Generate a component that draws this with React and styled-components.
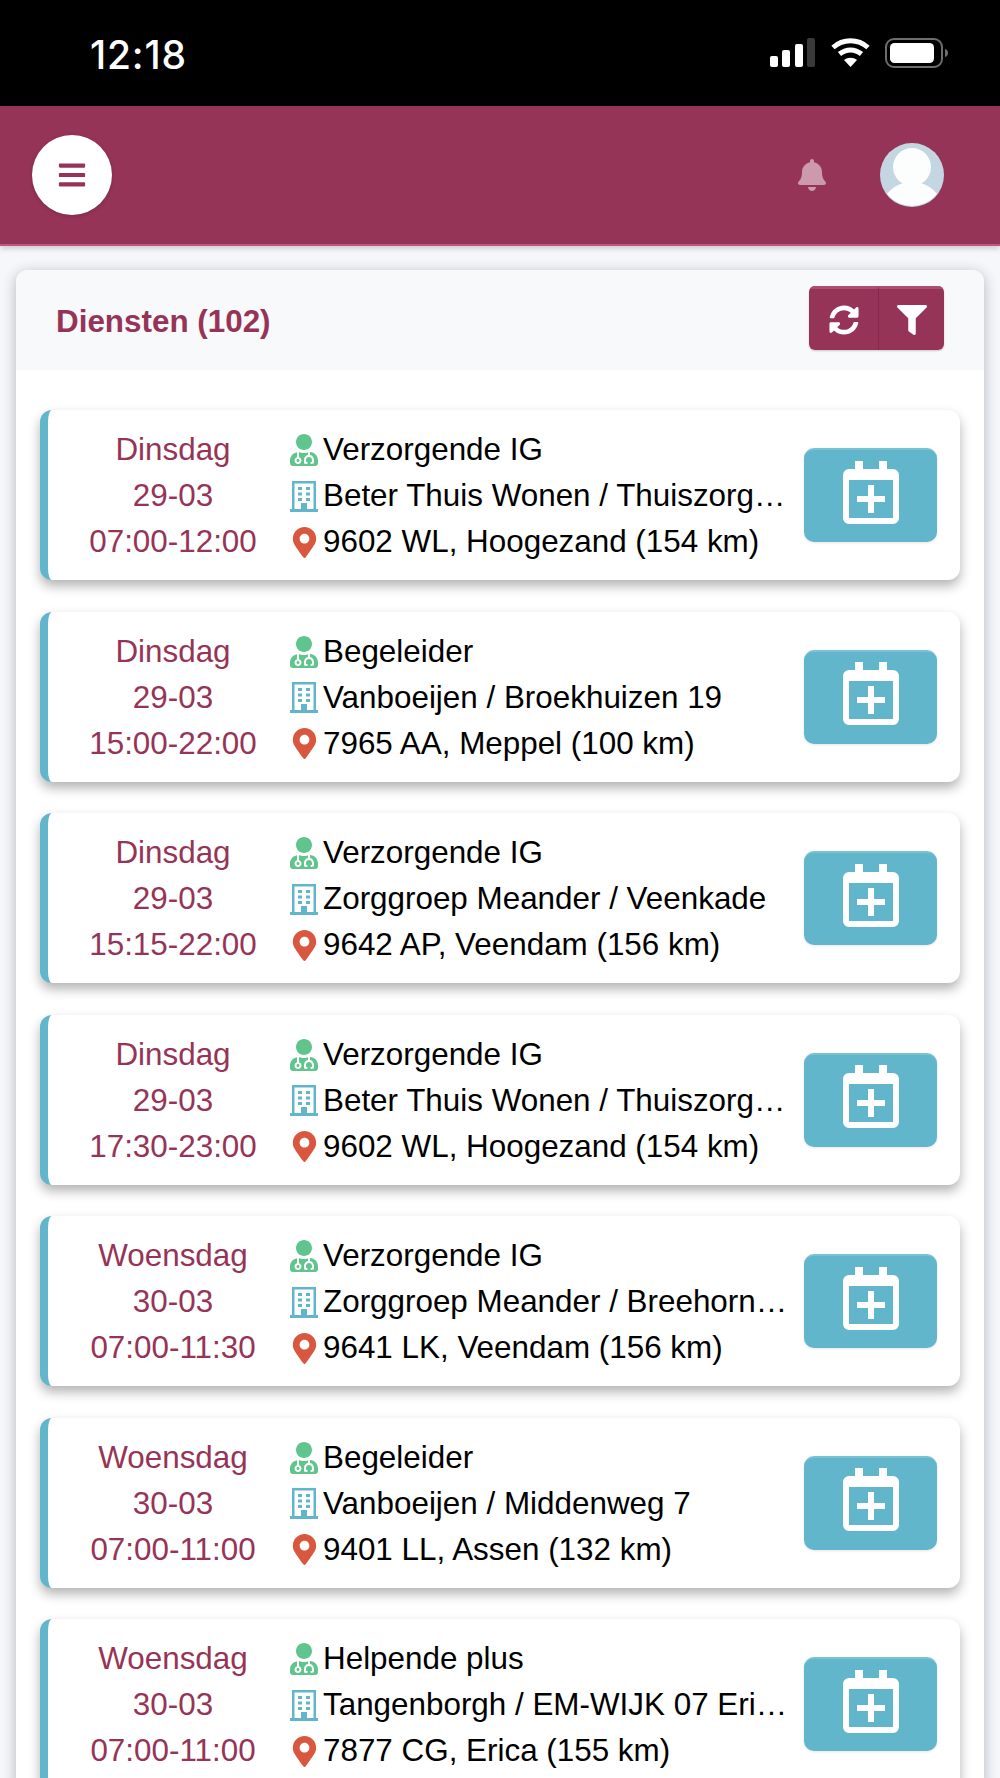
import React from 'react';
import styled, {createGlobalStyle} from 'styled-components';
import {FaBars, FaBell, FaFilter, FaMapMarkerAlt, FaSyncAlt, FaUserMd} from 'react-icons/fa';

const GlobalStyle = createGlobalStyle`
  html, body {
    margin: 0;
    padding: 0;
    height: 1778px;
    overflow: hidden;
    background: #f6f7fa;
    font-family: "Liberation Sans", Arial, sans-serif;
  }
`;

const wine = '#963458';
const teal = '#62b6cb';

const Page = styled.div`
  width: 1000px;
  height: 1778px;
  overflow: hidden;
  display: flex;
  flex-direction: column;
  background: #f6f7fa;
`;

const StatusBar = styled.div`
  height: 106px;
  flex: none;
  background: #000;
  color: #fff;
  display: flex;
  align-items: center;
  justify-content: space-between;
  padding: 0 52px 0 90px;
  box-sizing: border-box;
`;
const Clock = styled.span`
  font-family: Inter, sans-serif;
  font-size: 39px;
  font-weight: 500;
  letter-spacing: .8px;
  position: relative;
  top: 1px;
`;
const StatusIcons = styled.div`
  display: flex;
  align-items: center;
  gap: 15px;
`;

const Header = styled.header`
  height: 140px;
  flex: none;
  box-sizing: border-box;
  background: ${wine};
  border-bottom: 2px solid #c2567f;
  box-shadow: 0 2px 6px rgba(0, 0, 0, .2);
  display: flex;
  align-items: center;
  padding: 0 56px 0 32px;
  position: relative;
  z-index: 2;
`;
const MenuButton = styled.button`
  width: 80px;
  height: 80px;
  border: none;
  border-radius: 50%;
  background: #fff;
  color: ${wine};
  display: flex;
  align-items: center;
  justify-content: center;
  font-size: 30px;
  padding: 0;
  box-shadow: 0 1px 4px rgba(0, 0, 0, .2);
`;
const HeaderRight = styled.div`
  margin-left: auto;
  display: flex;
  align-items: center;
  gap: 52px;
  color: rgba(255, 255, 255, .5);
  font-size: 32px;
`;
const Avatar = styled.svg`
  width: 64px;
  height: 64px;
  display: block;
`;

const Panel = styled.section`
  margin: 24px 16px 0;
  background: #fff;
  border-radius: 12px 12px 0 0;
  box-shadow: 0 3px 14px rgba(40, 40, 70, .32);
  flex: 1;
`;
const PanelHead = styled.div`
  height: 100px;
  box-sizing: border-box;
  background: #f8f9fb;
  border-radius: 12px 12px 0 0;
  display: flex;
  align-items: center;
  justify-content: space-between;
  padding: 0 40px 4px;
`;
const PanelTitle = styled.h2`
  margin: 8px 0 0;
  font-size: 31.4px;
  font-weight: 700;
  color: ${wine};
`;
const ButtonGroup = styled.div`
  display: flex;
  height: 64px;
  border-radius: 6px;
  overflow: hidden;
  box-shadow: 0 1px 2px rgba(0, 0, 0, .2);
`;
const GroupButton = styled.button`
  width: ${p => p.$width}px;
  border: none;
  border-top: 3px solid #aa4f72;
  border-left: ${p => (p.$split ? '1px solid #87284c' : 'none')};
  background: ${wine};
  color: #fff;
  font-size: 30px;
  display: flex;
  align-items: center;
  justify-content: center;
  padding: 0;
`;

const List = styled.div`
  padding: 40px 24px 0;
  display: flex;
  flex-direction: column;
  gap: 31.5px;
`;
const Job = styled.article`
  height: 170px;
  flex: none;
  box-sizing: border-box;
  background: #fff;
  border-left: 8px solid ${teal};
  border-radius: 12px;
  box-shadow: 0 6px 12px rgba(0, 0, 0, .3);
  display: flex;
  align-items: center;
  padding-right: 23px;
`;
const DateColumn = styled.div`
  width: 234px;
  margin: 2px 0 0 8px;
  flex: none;
  color: ${wine};
  font-size: 31.4px;
  line-height: 46px;
  text-align: center;
`;
const Info = styled.div`
  width: 505px;
  flex: none;
  margin: 2px 0 0 -2px;
  display: flex;
  flex-direction: column;
  font-size: 31.4px;
  line-height: 46px;
  color: #000;
`;
const InfoRow = styled.div`
  display: flex;
  align-items: center;
  min-width: 0;
`;
const IconCell = styled.span`
  width: 35px;
  flex: none;
  box-sizing: border-box;
  padding-right: 3px;
  display: flex;
  justify-content: center;
  font-size: ${p => p.$size}px;
  color: ${p => p.$color};
`;
const InfoText = styled.span`
  flex: 1;
  min-width: 0;
  padding-right: 4px;
  white-space: nowrap;
  overflow: hidden;
  text-overflow: ellipsis;
`;
const PlanButton = styled.button`
  width: 133px;
  height: 94px;
  flex: none;
  margin-left: auto;
  border: none;
  border-top: 2px solid #78c2d4;
  border-radius: 10px;
  background: ${teal};
  padding: 0 0 9px;
  display: flex;
  align-items: center;
  justify-content: center;
  box-shadow: 0 1px 3px rgba(0, 0, 0, .1);
`;

const CalendarPlus = () => (
  <svg width="56" height="64" viewBox="0 0 56 64" fill="none">
    <path d="M12 1h8v8h16V1h8v8h6a6 6 0 0 1 6 6v43a6 6 0 0 1-6 6H6a6 6 0 0 1-6-6V15a6 6 0 0 1 6-6h6zM6 20v38h44V20z" fill="#fff"/>
    <path d="M25 25h6v11h11v6H31v11h-6V42H14v-6h11z" fill="#fff"/>
  </svg>
);

const Building = () => (
  <svg width="28" height="31" viewBox="0 0 28 31" fill={teal}>
    <path fillRule="evenodd" d="M2 0h24v28h2v3H0v-3h2zM4.500 2.500V28H11v-6h6v6h6.500V2.500z"/>
    <rect x="8" y="6" width="4" height="3"/>
    <rect x="16" y="6" width="4" height="3"/>
    <rect x="8" y="11.500" width="4" height="3"/>
    <rect x="16" y="11.500" width="4" height="3"/>
    <rect x="8" y="17" width="4" height="3"/>
    <rect x="16" y="17" width="4" height="3"/>
  </svg>
);

const Signal = () => (
  <svg width="46" height="30" viewBox="0 0 46 30">
    <rect x="0" y="18" width="8" height="11" rx="2" fill="#fff"/>
    <rect x="12" y="12" width="8" height="17" rx="2" fill="#fff"/>
    <rect x="25" y="6" width="8" height="23" rx="2" fill="#fff"/>
    <rect x="37" y="0" width="8" height="29" rx="2" fill="#3a3a3a"/>
  </svg>
);

const Wifi = () => (
  <svg width="39" height="30" viewBox="0 0 39 30" fill="none" stroke="#fff" strokeWidth="5">
    <path d="M2 9.5c10-9 25-9 35 0"/>
    <path d="M8.5 16c6.500-5.500 15.500-5.500 22 0"/>
    <path d="M19.500 29l-6.500-7c3.800-3 9.200-3 13 0z" fill="#fff" stroke="none"/>
  </svg>
);

const Battery = () => (
  <svg width="63" height="31" viewBox="0 0 63 31" fill="none">
    <rect x="1" y="1" width="56" height="28" rx="8" stroke="#6d6d6d" strokeWidth="2"/>
    <rect x="5" y="5" width="44" height="20" rx="4.500" fill="#fff"/>
    <path d="M60 11c2 .5 3 2 3 4s-1 3.500-3 4z" fill="#6d6d6d"/>
  </svg>
);

const jobs = [
  ['Dinsdag', '29-03', '07:00-12:00', 'Verzorgende IG', 'Beter Thuis Wonen / Thuiszorg Hoogezand', '9602 WL, Hoogezand (154 km)'],
  ['Dinsdag', '29-03', '15:00-22:00', 'Begeleider', 'Vanboeijen / Broekhuizen 19', '7965 AA, Meppel (100 km)'],
  ['Dinsdag', '29-03', '15:15-22:00', 'Verzorgende IG', 'Zorggroep Meander / Veenkade', '9642 AP, Veendam (156 km)'],
  ['Dinsdag', '29-03', '17:30-23:00', 'Verzorgende IG', 'Beter Thuis Wonen / Thuiszorg Hoogezand', '9602 WL, Hoogezand (154 km)'],
  ['Woensdag', '30-03', '07:00-11:30', 'Verzorgende IG', 'Zorggroep Meander / Breehorn Veendam', '9641 LK, Veendam (156 km)'],
  ['Woensdag', '30-03', '07:00-11:00', 'Begeleider', 'Vanboeijen / Middenweg 7', '9401 LL, Assen (132 km)'],
  ['Woensdag', '30-03', '07:00-11:00', 'Helpende plus', 'Tangenborgh / EM-WIJK 07 Erica Noord', '7877 CG, Erica (155 km)'],
];

const App = () => (
  <Page>
    <GlobalStyle/>
    <StatusBar>
      <Clock>12:18</Clock>
      <StatusIcons>
        <Signal/>
        <Wifi/>
        <Battery/>
      </StatusIcons>
    </StatusBar>
    <Header>
      <MenuButton><FaBars/></MenuButton>
      <HeaderRight>
        <FaBell/>
        <Avatar viewBox="0 0 64 64">
          <circle cx="32" cy="32" r="32" fill="#c3d6e2"/>
          <circle cx="32" cy="24" r="19" fill="#fcfdfd"/>
          <path d="M7 51c6-8 15-12 25-12s19 4 25 12a32 32 0 0 1-50 0z" fill="#fcfdfd"/>
        </Avatar>
      </HeaderRight>
    </Header>
    <Panel>
      <PanelHead>
        <PanelTitle>Diensten (102)</PanelTitle>
        <ButtonGroup>
          <GroupButton $width={69}><FaSyncAlt/></GroupButton>
          <GroupButton $width={66} $split><FaFilter/></GroupButton>
        </ButtonGroup>
      </PanelHead>
      <List>
        {jobs.map(([day, date, time, role, place, address], i) => (
          <Job key={i}>
            <DateColumn>
              <div>{day}</div>
              <div>{date}</div>
              <div>{time}</div>
            </DateColumn>
            <Info>
              <InfoRow>
                <IconCell $size={32} $color="#5fc58d"><FaUserMd/></IconCell>
                <InfoText>{role}</InfoText>
              </InfoRow>
              <InfoRow>
                <IconCell><Building/></IconCell>
                <InfoText>{place}</InfoText>
              </InfoRow>
              <InfoRow>
                <IconCell $size={31} $color="#d9573f"><FaMapMarkerAlt/></IconCell>
                <InfoText>{address}</InfoText>
              </InfoRow>
            </Info>
            <PlanButton><CalendarPlus/></PlanButton>
          </Job>
        ))}
      </List>
    </Panel>
  </Page>
);

export default App;
